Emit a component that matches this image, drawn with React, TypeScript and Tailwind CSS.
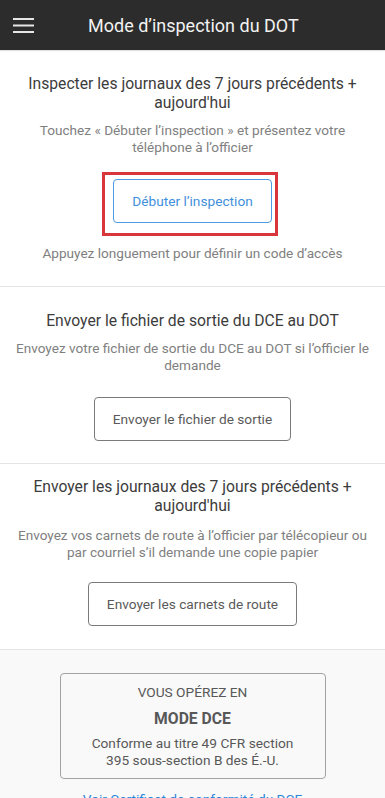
function OutlineButton({ label }: { label: string }) {
  return (
    <button className="h-[44px] px-[18px] rounded-[4px] border border-[#7a7a7a] bg-white text-[13.7px] text-[#5a5a5a]">
      {label}
    </button>
  );
}

export default function App() {
  return (
    <div className="min-h-screen bg-white font-['Roboto',sans-serif]">
      {/* Top bar */}
      <header className="h-[50px] bg-[#2c2c2c] flex items-center shadow-[0_1px_1px_rgba(0,0,0,0.12)]">
        <div className="w-[46px] flex justify-center pl-[1px]">
          <svg width="22" height="16" viewBox="0 0 22 16" className="text-[#e6e6e6]">
            <rect x="0" y="1" width="21" height="2" fill="currentColor" />
            <rect x="0" y="7.5" width="21" height="2" fill="currentColor" />
            <rect x="0" y="14" width="21" height="2" fill="currentColor" />
          </svg>
        </div>
        <h1 className="ml-[42px] text-[18px] text-[#f2f2f2]">Mode d’inspection du DOT</h1>
      </header>

      {/* Inspect */}
      <section className="px-3 pt-[24px] pb-[24px] text-center border-b border-[#e4e4e4]">
        <h2 className="text-[15.7px] leading-[19px] text-[#3c3c3c]">
          Inspecter les journaux des 7 jours précédents + aujourd'hui
        </h2>
        <p className="mt-[10px] text-[13.6px] leading-[17px] text-[#808080]">
          Touchez « Débuter l’inspection » et présentez votre téléphone à l’officier
        </p>
        <div className="mt-[23px] flex justify-center">
          <div className="relative">
            <button className="h-[44px] px-[18px] rounded-[4px] border border-[#4d9be3] bg-white text-[13.7px] text-[#3f8fdc]">
              Débuter l’inspection
            </button>
            <span className="absolute -left-[11px] -right-[6px] -top-[7px] -bottom-[13px] border-[3px] border-[#d9363c] pointer-events-none" />
          </div>
        </div>
        <p className="mt-[22px] text-[13.6px] leading-[17px] text-[#808080]">
          Appuyez longuement pour définir un code d’accès
        </p>
      </section>

      {/* Output file */}
      <section className="px-3 pt-[24px] pb-[22px] text-center border-b border-[#e4e4e4]">
        <h2 className="text-[15.7px] leading-[19px] text-[#3c3c3c]">
          Envoyer le fichier de sortie du DCE au DOT
        </h2>
        <p className="mt-[10px] text-[13.6px] leading-[17px] text-[#808080]">
          Envoyez votre fichier de sortie du DCE au DOT si l’officier le demande
        </p>
        <div className="mt-[23px] flex justify-center">
          <OutlineButton label="Envoyer le fichier de sortie" />
        </div>
      </section>

      {/* Logs */}
      <section className="px-3 pt-[13px] pb-[23px] text-center border-b border-[#e4e4e4]">
        <h2 className="text-[15.7px] leading-[19px] text-[#3c3c3c]">
          Envoyer les journaux des 7 jours précédents + aujourd'hui
        </h2>
        <p className="mt-[12px] text-[13.6px] leading-[17px] text-[#808080]">
          Envoyez vos carnets de route à l’officier par télécopieur ou par courriel s’il demande une copie papier
        </p>
        <div className="mt-[21px] flex justify-center">
          <OutlineButton label="Envoyer les carnets de route" />
        </div>
      </section>

      {/* ELD mode */}
      <section className="bg-[#f9f9f9] pt-[23px] pb-6 flex flex-col items-center text-center">
        <div className="w-[266px] rounded-[4px] border border-[#a3a3a3] pt-[10px] pb-[9px] px-[26px] text-[#585858]">
          <p className="text-[13.7px] leading-[17px]">VOUS OPÉREZ EN</p>
          <p className="mt-[8px] text-[15.7px] leading-[19px] font-bold">MODE DCE</p>
          <p className="mt-[7px] text-[13.7px] leading-[17px]">
            Conforme au titre 49 CFR section 395 sous-section B des É.-U.
          </p>
        </div>
        <a className="mt-[12px] text-[13.7px] leading-[17px] text-[#2b87d9]">
          Voir Certificat de conformité du DCE
        </a>
      </section>
    </div>
  );
}
